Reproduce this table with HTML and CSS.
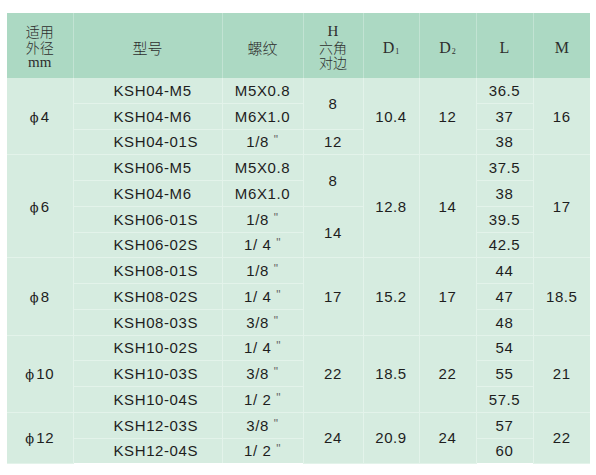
FILE: index.html
```html
<!DOCTYPE html>
<html lang="zh">
<head>
<meta charset="utf-8">
<link rel="stylesheet" href="styles.css">
</head>
<body>
<table class="spec">
  <colgroup>
    <col class="c-dia"><col class="c-model"><col class="c-thread"><col class="c-h"><col class="c-d1"><col class="c-d2"><col class="c-l"><col class="c-m">
  </colgroup>
  <thead>
    <tr>
      <th><div class="hl cjk">适用</div><div class="hl cjk">外径</div><div class="hl lat">mm</div></th>
      <th><div class="hl cjk big">型号</div></th>
      <th><div class="hl cjk big">螺纹</div></th>
      <th><div class="hl lat">H</div><div class="hl cjk">六角</div><div class="hl cjk">对边</div></th>
      <th class="lat">D<sub>1</sub></th>
      <th class="lat">D<sub>2</sub></th>
      <th class="lat">L</th>
      <th class="lat">M</th>
    </tr>
  </thead>
  <tbody>
    <tr><td rowspan="3" class="dia"><span class="phi">ϕ</span>4</td><td class="model">KSH04-M5</td><td>M5X0.8</td><td rowspan="2">8</td><td rowspan="3">10.4</td><td rowspan="3">12</td><td>36.5</td><td rowspan="3">16</td></tr>
    <tr><td class="model">KSH04-M6</td><td>M6X1.0</td><td>37</td></tr>
    <tr><td class="model">KSH04-01S</td><td>1/8 <span class="in">"</span></td><td>12</td><td>38</td></tr>

    <tr><td rowspan="4" class="dia"><span class="phi">ϕ</span>6</td><td class="model">KSH06-M5</td><td>M5X0.8</td><td rowspan="2">8</td><td rowspan="4">12.8</td><td rowspan="4">14</td><td>37.5</td><td rowspan="4">17</td></tr>
    <tr><td class="model">KSH04-M6</td><td>M6X1.0</td><td>38</td></tr>
    <tr><td class="model">KSH06-01S</td><td>1/8 <span class="in">"</span></td><td rowspan="2">14</td><td>39.5</td></tr>
    <tr><td class="model">KSH06-02S</td><td>1/ 4 <span class="in">"</span></td><td>42.5</td></tr>

    <tr><td rowspan="3" class="dia"><span class="phi">ϕ</span>8</td><td class="model">KSH08-01S</td><td>1/8 <span class="in">"</span></td><td rowspan="3">17</td><td rowspan="3">15.2</td><td rowspan="3">17</td><td>44</td><td rowspan="3">18.5</td></tr>
    <tr><td class="model">KSH08-02S</td><td>1/ 4 <span class="in">"</span></td><td>47</td></tr>
    <tr><td class="model">KSH08-03S</td><td>3/8 <span class="in">"</span></td><td>48</td></tr>

    <tr><td rowspan="3" class="dia"><span class="phi">ϕ</span>10</td><td class="model">KSH10-02S</td><td>1/ 4 <span class="in">"</span></td><td rowspan="3">22</td><td rowspan="3">18.5</td><td rowspan="3">22</td><td>54</td><td rowspan="3">21</td></tr>
    <tr><td class="model">KSH10-03S</td><td>3/8 <span class="in">"</span></td><td>55</td></tr>
    <tr><td class="model">KSH10-04S</td><td>1/ 2 <span class="in">"</span></td><td>57.5</td></tr>

    <tr><td rowspan="2" class="dia"><span class="phi">ϕ</span>12</td><td class="model">KSH12-03S</td><td>3/8 <span class="in">"</span></td><td rowspan="2">24</td><td rowspan="2">20.9</td><td rowspan="2">24</td><td>57</td><td rowspan="2">22</td></tr>
    <tr><td class="model">KSH12-04S</td><td>1/ 2 <span class="in">"</span></td><td>60</td></tr>
  </tbody>
</table>
</body>
</html>
```

FILE: styles.css
```css
html, body {
  margin: 0;
  background: #ffffff;
}
body {
  padding: 13px 0 0 7px;
}
.spec {
  border-collapse: collapse;
  table-layout: fixed;
  width: 583px;
  font-family: "Liberation Sans", Arial, sans-serif;
  color: #1e1e1e;
}
.c-dia { width: 66px; }
.c-model { width: 149px; }
.c-thread { width: 81px; }
.c-h { width: 60px; }
.c-d1 { width: 56px; }
.c-d2 { width: 57px; }
.c-l { width: 57px; }
.c-m { width: 57px; }

.spec th {
  height: 61px;
  padding: 4px 0 0;
  background: #acd9c3;
  border-left: 1px solid #c2e3d3;
  font-weight: normal;
  color: #2e2e2e;
  text-align: center;
  vertical-align: middle;
}
.spec th:first-child { border-left: none; }
.spec .hl {
  height: 15.5px;
  line-height: 15.5px;
  overflow: visible;
  white-space: nowrap;
}
.spec .cjk {
  font-family: "Noto Sans CJK SC", sans-serif;
  font-size: 14px;
  font-weight: 300;
}
.spec .cjk.big {
  font-size: 15px;
}
.spec .lat {
  font-family: "Liberation Serif", "Times New Roman", serif;
  font-size: 15px;
}
.spec th.lat {
  font-size: 16px;
}
.spec sub {
  font-size: 8px;
  vertical-align: -1px;
  margin-left: 1px;
}
.spec td {
  height: 24.76px;
  padding: 0;
  background: #d6ece0;
  border: 1px solid #e3f3ea;
  font-size: 15px;
  letter-spacing: 0.6px;
  text-align: center;
  vertical-align: middle;
  white-space: nowrap;
}
.spec tbody tr:first-child td { border-top: none; }
.spec td:first-child { border-left: none; }
.spec tbody tr:first-child td:last-child,
.spec td[rowspan]:last-child { border-right: none; }
.spec tbody tr:last-child td { border-bottom: none; }
.spec td.model {
  text-align: left;
  padding-left: 40px;
}
.spec .phi {
  font-family: "DejaVu Serif", serif;
  font-size: 13px;
  margin-right: 2px;
  letter-spacing: 0;
}
.spec .in {
  font-size: 12px;
  vertical-align: 3px;
  color: #666;
}
```
